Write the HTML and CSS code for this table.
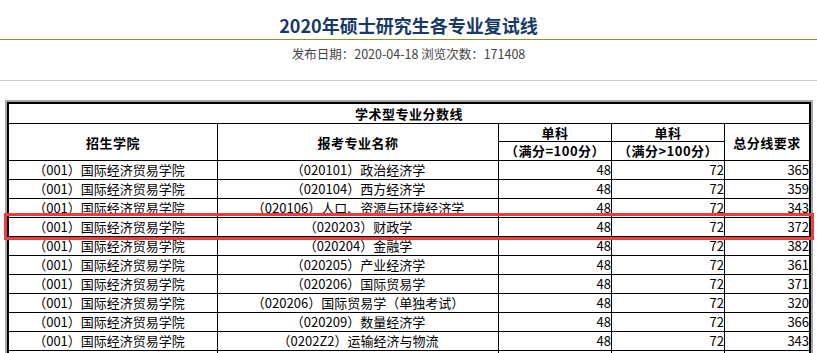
FILE: index.html
```html
<!DOCTYPE html>
<html lang="zh-CN">
<head>
<meta charset="utf-8">
<title>2020年硕士研究生各专业复试线</title>
<link rel="stylesheet" href="styles.css">
</head>
<body>
<div class="page">
  <h1 class="title">2020年硕士研究生各专业复试线</h1>
  <div class="meta">发布日期：2020-04-18 浏览次数：171408</div>
  <div class="content">
    <div class="frame">
      <table class="scores">
        <colgroup>
          <col class="c1"><col class="c2"><col class="c3"><col class="c4"><col class="c5">
        </colgroup>
        <thead>
          <tr class="cap"><th colspan="5" class="last">学术型专业分数线</th></tr>
          <tr class="h1">
            <th rowspan="2">招生学院</th>
            <th rowspan="2">报考专业名称</th>
            <th>单科</th>
            <th>单科</th>
            <th rowspan="2" class="last">总分线要求</th>
          </tr>
          <tr class="h2">
            <th>（满分=100分）</th>
            <th>（满分&gt;100分）</th>
          </tr>
        </thead>
        <tbody>
          <tr><td class="school">（001）国际经济贸易学院</td><td class="major">（020101）政治经济学</td><td class="num">48</td><td class="num">72</td><td class="num last">365</td></tr>
          <tr><td class="school">（001）国际经济贸易学院</td><td class="major">（020104）西方经济学</td><td class="num">48</td><td class="num">72</td><td class="num last">359</td></tr>
          <tr><td class="school">（001）国际经济贸易学院</td><td class="major">（020106）人口、资源与环境经济学</td><td class="num">48</td><td class="num">72</td><td class="num last">343</td></tr>
          <tr><td class="school">（001）国际经济贸易学院</td><td class="major">（020203）财政学</td><td class="num">48</td><td class="num">72</td><td class="num last">372</td></tr>
          <tr><td class="school">（001）国际经济贸易学院</td><td class="major">（020204）金融学</td><td class="num">48</td><td class="num">72</td><td class="num last">382</td></tr>
          <tr><td class="school">（001）国际经济贸易学院</td><td class="major">（020205）产业经济学</td><td class="num">48</td><td class="num">72</td><td class="num last">361</td></tr>
          <tr><td class="school">（001）国际经济贸易学院</td><td class="major">（020206）国际贸易学</td><td class="num">48</td><td class="num">72</td><td class="num last">371</td></tr>
          <tr><td class="school">（001）国际经济贸易学院</td><td class="major">（020206）国际贸易学（单独考试）</td><td class="num">48</td><td class="num">72</td><td class="num last">320</td></tr>
          <tr><td class="school">（001）国际经济贸易学院</td><td class="major">（020209）数量经济学</td><td class="num">48</td><td class="num">72</td><td class="num last">366</td></tr>
          <tr><td class="school">（001）国际经济贸易学院</td><td class="major">（0202Z2）运输经济与物流</td><td class="num">48</td><td class="num">72</td><td class="num last">343</td></tr>
          <tr class="tail"><td></td><td></td><td></td><td></td><td class="last"></td></tr>
        </tbody>
      </table>
    </div>
    <div class="highlight"></div>
  </div>
</div>
</body>
</html>
```

FILE: styles.css
```css
html, body {
  margin: 0;
  padding: 0;
  background: #fff;
}

body {
  width: 817px;
  height: 353px;
  overflow: hidden;
  font-family: "Noto Sans CJK SC", "Noto Sans", sans-serif;
}

.page {
  width: 817px;
}

.title {
  margin: 0;
  height: 28px;
  padding-top: 11px;
  line-height: 28px;
  font-size: 18px;
  font-weight: bold;
  color: #173a64;
  text-align: center;
  border-bottom: 1px solid #7d9c2c;
}

.meta {
  height: 34px;
  padding-top: 6px;
  line-height: 16px;
  font-size: 12.5px;
  color: #444;
  text-align: center;
  border-bottom: 1px solid #cccccc;
}

.content {
  position: relative;
  padding-top: 19px;
}

.frame {
  margin-left: 5px;
  width: 804px;
  border: 2px solid #a6a6a6;
}

.scores {
  table-layout: fixed;
  border-collapse: separate;
  border-spacing: 0;
  width: 804px;
  border: 2px solid #000;
  font-size: 13px;
  color: #000;
}

.c1 { width: 209px; }
.c2 { width: 281px; }
.c3 { width: 113px; }
.c4 { width: 113px; }
.c5 { width: 84px; }

.scores th,
.scores td {
  padding: 0;
  border-right: 1px solid #000;
  border-bottom: 1px solid #000;
  white-space: nowrap;
  overflow: hidden;
}

.scores .last {
  border-right: 0;
}

.scores th {
  font-weight: bold;
  text-align: center;
  letter-spacing: 0.5px;
}

.cap th {
  height: 19px;
  line-height: 19px;
}

.h1 th {
  height: 17px;
  line-height: 17px;
}

.h2 th {
  height: 18px;
  line-height: 18px;
}

.scores td {
  height: 18px;
  line-height: 18px;
}

.school {
  text-align: center;
  padding-right: 8px !important;
}

.major {
  text-align: center;
}

.num {
  text-align: right;
}

.highlight {
  position: absolute;
  left: 4px;
  top: 132px;
  width: 804px;
  height: 21px;
  border: 3px solid #f03c3c;
}
```
